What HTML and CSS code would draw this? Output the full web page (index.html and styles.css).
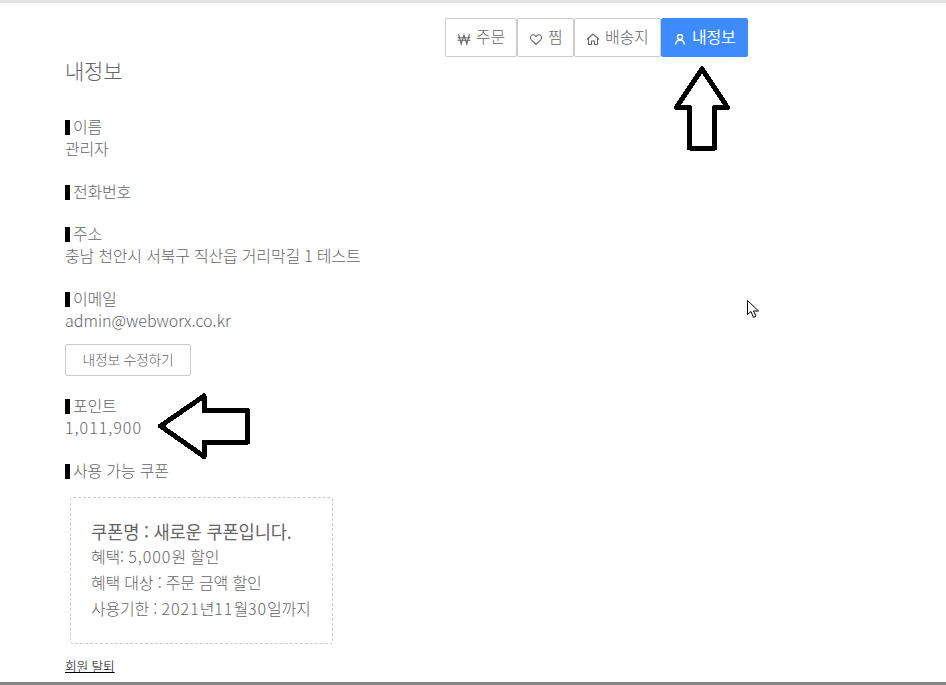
FILE: index.html
```html
<!DOCTYPE html>
<html lang="ko">
<head>
    <meta charset="UTF-8">
    <meta name="viewport" content="width=device-width, initial-scale=1.0">
    <title>내정보</title>
    <link rel="stylesheet" href="styles.css">
</head>
<body>
    <div class="page">
        <nav class="tabs">
            <a class="tab" href="#">
                <svg class="tab-icon" viewBox="0 0 14 14"><path d="M1.500 2l2.700 10 2.800-9 2.800 9 2.700-10M0.500 5.800h13M0.500 8.300h13"/></svg>
                주문
            </a>
            <a class="tab" href="#">
                <svg class="tab-icon" viewBox="0 0 14 14"><path d="M7 12.500L2.300 7.800C0.300 5.300 2.200 2.500 4.500 2.700 5.700 2.800 6.500 3.500 7 4.400 7.500 3.500 8.300 2.800 9.500 2.700 11.800 2.500 13.700 5.300 11.700 7.800z"/></svg>
                찜
            </a>
            <a class="tab" href="#">
                <svg class="tab-icon" viewBox="0 0 14 14"><path d="M1 7.500l6-5.500 6 5.500M2.500 6.500v6h3V9h3v3.500h3v-6"/></svg>
                배송지
            </a>
            <a class="tab tab-active" href="#">
                <svg class="tab-icon tab-icon-bold" viewBox="0 0 14 14"><circle cx="7" cy="5" r="2.500"/><path d="M2.500 12.500c.5-3 2-4.500 4.500-4.500s4 1.500 4.500 4.500"/></svg>
                내정보
            </a>
        </nav>

        <h1 class="title">내정보</h1>

        <section class="info">
            <h2 class="info-label">이름</h2>
            <p class="info-value">관리자</p>
        </section>
        <section class="info">
            <h2 class="info-label">전화번호</h2>
        </section>
        <section class="info">
            <h2 class="info-label">주소</h2>
            <p class="info-value">충남 천안시 서북구 직산읍 거리막길 1 테스트</p>
        </section>
        <section class="info info-email">
            <h2 class="info-label">이메일</h2>
            <p class="info-value info-latin">admin@webworx.co.kr</p>
        </section>
        <a class="edit-btn" href="#">내정보 수정하기</a>
        <section class="info">
            <h2 class="info-label">포인트</h2>
            <p class="info-value"><span class="num">1,011,900</span></p>
        </section>
        <section class="info info-coupon">
            <h2 class="info-label">사용 가능 쿠폰</h2>
        </section>

        <div class="coupon">
            <strong class="coupon-name">쿠폰명 : 새로운 쿠폰입니다.</strong>
            <p>혜택: <span class="num">5,000</span>원 할인</p>
            <p>혜택 대상 : 주문 금액 할인</p>
            <p>사용기한 : <span class="num">2021</span>년<span class="num">11</span>월<span class="num">30</span>일까지</p>
        </div>

        <a class="leave" href="#">회원 탈퇴</a>
    </div>

    <!-- annotations drawn on top of the screenshot -->
    <svg class="mark" width="946" height="685" viewBox="0 0 946 685">
        <path class="arrow" d="M702 69L676.500 107.500H689.500V148H714.500V107.500H727.500z"/>
        <path class="arrow" d="M160.500 426L204 396V410.500H247.500V442H204V456.500z"/>
        <path class="cursor" d="M747.500 300.500V314.500L751 311.500 753.500 317.500 756 316 753.500 311H758.500z"/>
    </svg>
</body>
</html>
```

FILE: styles.css
```css
html, body {
    margin: 0;
    height: 100%;
}

body {
    font-family: "Noto Sans CJK KR", "Noto Sans", sans-serif;
    font-weight: 300;
    font-size: 16px;
    letter-spacing: -0.2px;
    color: #666;
    background: #fff;
    box-sizing: border-box;
    height: 685px;
    overflow: hidden;
    border-top: 3px solid #e2e2e2;
    border-bottom: 3px solid #868686;
    position: relative;
}

.page {
    padding: 15px 0 0 65px;
}

.tabs {
    display: grid;
    grid-template-columns: 72px 57px 87px 87px;
    margin-left: 380px;
    height: 39px;
}

.tab {
    display: flex;
    align-items: center;
    gap: 5px;
    padding: 0 0 3px 11px;
    border: 1px solid #ccc;
    border-radius: 2px;
    color: #666;
    text-decoration: none;
    box-sizing: border-box;
}

.tab-active {
    background: #3d8bfd;
    border-color: #3d8bfd;
    color: #fff;
    font-weight: 400;
}

.tab-icon {
    width: 14px;
    height: 14px;
    fill: none;
    stroke: currentColor;
    stroke-width: 1.1;
    margin-top: 5px;
}

.tab-icon-bold {
    stroke-width: 1.5;
}

.title {
    margin: -2px 0 31px;
    font-size: 21px;
    font-weight: 300;
    line-height: 30px;
}

.info {
    margin-bottom: 20.5px;
}

.info-email {
    margin-bottom: 12.5px;
}

.info-coupon {
    margin-bottom: 15px;
}

.info-label {
    display: flex;
    align-items: flex-start;
    height: 22px;
    margin: 0;
    font-size: 16px;
    font-weight: 300;
    line-height: 20px;
}

.info-label::before {
    content: "";
    width: 5px;
    height: 15px;
    margin: 4px 3px 0 0;
    background: #000;
}

.info-value {
    height: 22px;
    margin: 0;
    line-height: 20px;
}

.info-latin {
    letter-spacing: 0;
}

.num {
    letter-spacing: 1px;
}

.edit-btn {
    display: block;
    width: 126px;
    height: 32px;
    box-sizing: border-box;
    border: 1px solid #ccc;
    border-radius: 2px;
    font-size: 13.8px;
    line-height: 28px;
    text-align: center;
    color: #666;
    text-decoration: none;
    margin-bottom: 19px;
}

.coupon {
    margin-left: 5px;
    width: 263px;
    height: 147px;
    box-sizing: border-box;
    border: 1px dashed #ccc;
    border-radius: 3px;
    padding: 21px 20px;
}

.coupon p {
    height: 26px;
    margin: 0;
    line-height: 24px;
}

.coupon-name {
    display: block;
    height: 25px;
    font-size: 17.700px;
    font-weight: 400;
    line-height: 24px;
}

.leave {
    display: inline-block;
    margin-top: 13px;
    font-size: 12.8px;
    line-height: 18px;
    color: #000;
}

.mark {
    position: absolute;
    left: 0;
    top: -3px;
    pointer-events: none;
}

.arrow {
    fill: #fff;
    stroke: #000;
    stroke-width: 5;
    stroke-linejoin: round;
    shape-rendering: crispEdges;
}

.cursor {
    fill: #fff;
    stroke: #000;
    stroke-width: 1;
}
```
